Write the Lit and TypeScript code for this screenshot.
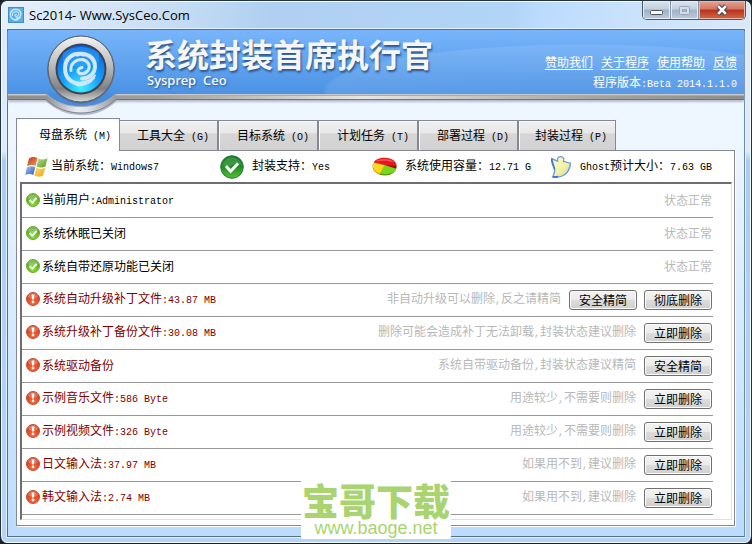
import { LitElement, html, css, svg } from "lit";
import { customElement, property, state } from "lit/decorators.js";
import { classMap } from "lit/directives/class-map.js";

// Splits mixed text so that Latin runs get the half-width monospace face.
const mixed = (text: string) =>
  text
    .split(/([\x20-\x7e]+)/)
    .filter((p) => p)
    .map((p) => (/^[\x20-\x7e]/.test(p) ? html`<span class="latin">${p}</span>` : p));

const shared = css`
  * {
    box-sizing: border-box;
  }
  .latin {
    font-family: "Liberation Mono", monospace;
    font-size: 10px;
    white-space: pre;
  }
  svg {
    display: block;
    flex: none;
  }
  button {
    font: inherit;
    color: inherit;
    margin: 0;
    padding: 0;
  }
`;

const swirl = svg`
  <g fill="none" stroke="#cfe8ff" stroke-linecap="round">
    <path d="M31 7C20 4 12 11 12 21c0 11 10 18 20 14" stroke-width="4" />
    <path d="M16 31c7 7 19 5 26-3M24 37.500c8 1 14-3 17-7" stroke-width="2" />
    <path d="M24 7c9-3 18 3 18 12 0 7-6 12-13 12" stroke-width="4" />
    <path d="M18 23c-1-7 5-11 11-11 6 1 9 6 6 11-3 4-9 4-10 1-.5-2 1-3.500 4-4" stroke-width="3" />
  </g>`;

interface Row {
  label: string;
  note: string;
  warn?: boolean;
  actions?: string[];
}

@customElement("status-row")
export class StatusRow extends LitElement {
  @property({ attribute: false }) row!: Row;

  static styles = [
    shared,
    css`
      :host {
        box-sizing: border-box;
        display: flex;
        align-items: center;
        height: 33px;
        padding: 0 1px 2px 4px;
        border-bottom: 1px solid #999;
      }
      .label {
        flex: 1;
        margin-left: 2px;
        white-space: nowrap;
      }
      .warn {
        color: #800000;
      }
      .note {
        color: #b8b8b8;
        white-space: nowrap;
      }
      .actions {
        display: flex;
        gap: 7px;
        margin-left: 8px;
        padding-top: 2px;
      }
      .action {
        width: 68px;
        height: 20px;
        border: 1px solid #707070;
        border-radius: 3px;
        color: #000;
        line-height: 18px;
        background: linear-gradient(#f3f3f3, #ebebeb 48%, #dcdcdc 52%, #cfcfcf);
        box-shadow: inset 0 0 0 1px #fcfcfc;
      }
    `,
  ];

  render() {
    const { label, note, warn, actions } = this.row;
    return html`
      <svg width="14" height="16" viewBox="0 0 14 16" aria-hidden="true">
        <defs>
          <radialGradient id="g" cx=".5" cy=".8" r=".8">
            <stop offset="0" stop-color=${warn ? "#ff6a3a" : "#8be02a"} />
            <stop offset="1" stop-color=${warn ? "#c93414" : "#4d9c1c"} />
          </radialGradient>
        </defs>
        <circle cx="7" cy="8" r="6.5" fill="url(#g)" stroke=${warn ? "#b5563c" : "#6da83c"} />
        <ellipse cx="7" cy="5" rx="5" ry="3" fill="#fff" opacity=".25" />
        ${warn
          ? svg`<path d="M5.6 3.6h2.8l-.5 5H6.1z" fill="#fff"/><circle cx="7" cy="10.9" r="1.3" fill="#fff"/>`
          : svg`<path d="M3.6 8l2.6 2.6L10.6 6" fill="none" stroke="#fff" stroke-width="2"/>`}
      </svg>
      <span class=${classMap({ label: true, warn: !!warn })}>${mixed(label)}</span>
      <span class="note">${mixed(note)}</span>
      ${actions
        ? html`<span class="actions">
            ${actions.map((a) => html`<button class="action" type="button">${a}</button>`)}
          </span>`
        : ""}
    `;
  }
}

const ROWS: Row[] = [
  { label: "当前用户:Administrator", note: "状态正常" },
  { label: "系统休眠已关闭", note: "状态正常" },
  { label: "系统自带还原功能已关闭", note: "状态正常" },
  {
    label: "系统自动升级补丁文件:43.87 MB",
    note: "非自动升级可以删除,反之请精简",
    warn: true,
    actions: ["安全精简", "彻底删除"],
  },
  {
    label: "系统升级补丁备份文件:30.08 MB",
    note: "删除可能会造成补丁无法卸载,封装状态建议删除",
    warn: true,
    actions: ["立即删除"],
  },
  { label: "系统驱动备份", note: "系统自带驱动备份,封装状态建议精简", warn: true, actions: ["安全精简"] },
  { label: "示例音乐文件:586 Byte", note: "用途较少,不需要则删除", warn: true, actions: ["立即删除"] },
  { label: "示例视频文件:326 Byte", note: "用途较少,不需要则删除", warn: true, actions: ["立即删除"] },
  { label: "日文输入法:37.97 MB", note: "如果用不到,建议删除", warn: true, actions: ["立即删除"] },
  { label: "韩文输入法:2.74 MB", note: "如果用不到,建议删除", warn: true, actions: ["立即删除"] },
];

const TABS = ["母盘系统 (M)", "工具大全 (G)", "目标系统 (O)", "计划任务 (T)", "部署过程 (D)", "封装过程 (P)"];
const LINKS = ["赞助我们", "关于程序", "使用帮助", "反馈"];

const windowsIcon = html`<svg width="24" height="22" viewBox="0 0 24 22" aria-hidden="true">
  <defs>
    <linearGradient id="wr" x2="1" y2="1"><stop stop-color="#b8391c" /><stop offset="1" stop-color="#f59a5a" /></linearGradient>
    <linearGradient id="wg" x2="1" y2="1"><stop stop-color="#c4e08a" /><stop offset="1" stop-color="#4c9a2a" /></linearGradient>
    <linearGradient id="wb" x2="1" y2="1"><stop stop-color="#a8c8f0" /><stop offset="1" stop-color="#2a5cb8" /></linearGradient>
    <linearGradient id="wy" x2="1" y2="1"><stop stop-color="#ffe070" /><stop offset="1" stop-color="#f0a010" /></linearGradient>
  </defs>
  <path d="M4 2.500C7 .5 10 .8 12.500 2L10.500 10C8 8.600 5 8.800 2 10.200z" fill="url(#wr)" />
  <path d="M13.500 2.600c3 1.400 6 1.200 9-.4L20.500 10.500c-3 1.500-6 1.400-9 .1z" fill="url(#wg)" />
  <path d="M1.800 11.500c3-1.600 6-1.600 8.500-.2L8.300 19C6 17.600 3 17.600.2 19z" fill="url(#wb)" />
  <path d="M11.300 11.800c3 1.400 6 1.300 9-.3L18 19.500c-3 1.700-6 1.500-8.700.1z" fill="url(#wy)" />
</svg>`;

const okIcon = html`<svg width="24" height="24" viewBox="0 0 24 24" aria-hidden="true">
  <defs>
    <linearGradient id="ok" x2="0" y2="1"><stop stop-color="#167a22" /><stop offset=".5" stop-color="#1f8f24" /><stop offset="1" stop-color="#55c035" /></linearGradient>
  </defs>
  <circle cx="12" cy="12" r="11.300" fill="url(#ok)" stroke="#2b7a3a" />
  <path d="M2.500 10a9.700 9.700 0 0 1 19 0C15 7 9 13 2.500 10z" fill="#fff" opacity=".15" />
  <path d="M6 11l4.600 5.200L18 8.500" fill="none" stroke="#fff" stroke-width="3" />
</svg>`;

const pieIcon = html`<svg width="25" height="20" viewBox="0 0 25 20" aria-hidden="true">
  <path d="M.8 7v3.500C1.500 15 7 18.500 13 18.500S24 15 24.300 11V8z" fill="#5a9a10" />
  <path d="M.8 7v3.500C1.500 14 4 16.500 8 17.600L12.500 9z" fill="#e8a800" />
  <path d="M12.500 8.500L24.400 7.500v4z" fill="#a00808" />
  <path d="M12.500 8L24.300 12C23 15 18 17 13 17c-2 0-3.500-.3-5-.8z" fill="#78d818" />
  <path d="M12.500 8L8 16.200C3.500 15 .8 11.500.8 7.500L2 5.500z" fill="#ffd820" />
  <path d="M12.500 8L1.500 5.500C3 2.500 7.500.8 12.500.8 19 .8 24.300 4 24.300 8v1z" fill="#e81818" />
  <path d="M3.500 4.500C6 1.500 18 .5 22.500 5.500 17 3.500 9 3 3.500 4.500z" fill="#ff8080" opacity=".6" />
</svg>`;

const ghostIcon = html`<svg width="22" height="24" viewBox="0 0 22 24" aria-hidden="true">
  <defs>
    <linearGradient id="gh" x2="1" y2="1"><stop stop-color="#fdfbd0" /><stop offset=".6" stop-color="#f4f0a0" /><stop offset="1" stop-color="#a8c8d8" /></linearGradient>
  </defs>
  <path d="M2.500 22c2.500-4 3-7 1-10C2.500 9.500 1.500 7 1.700 3.500 3.500 4 5 5.500 7.500 6.200 7 3.500 8.500 1.200 11 1.600c2.600.4 3.300 2.600 2.500 4.800 2.500.3 4.600 1.700 7 1.700-.2 3.500-1.500 8-5.500 11.500-3.500 2.600-8 3-12.500 2.400z" fill="url(#gh)" stroke="#6a9ae0" stroke-width="1.300" />
  <path d="M1.700 4c0 4 2.800 7 2.900 10.500M3 21.800c2 .2 3.500 0 5-.2" fill="none" stroke="#3a74dc" stroke-width="1.600" />
</svg>`;

const INFO = [
  { icon: windowsIcon, text: "当前系统：Windows7", wide: false },
  { icon: okIcon, text: "封装支持：Yes", wide: true },
  { icon: pieIcon, text: "系统使用容量：12.71 G", wide: true },
  { icon: ghostIcon, text: "Ghost预计大小：7.63 GB", wide: true },
];

@customElement("app-root")
export class AppRoot extends LitElement {
  @state() private active = 0;

  static styles = [
    shared,
    css`
      :host {
        display: block;
        background: #1a2028;
        padding-bottom: 1px;
        font: 12px/16px "Noto Sans CJK SC", sans-serif;
        color: #000;
      }
      .window {
        position: relative;
        padding: 0 6px 6px;
        border: 1px solid #26323e;
        border-width: 1px 1px 0;
        border-radius: 7px;
        background: linear-gradient(#dcebfb, #dcebfb 150px, #a9cdf2 160px, #b4d5f6);
        box-shadow: inset 0 0 0 1px #f2f9ff;
      }
      .titlebar {
        display: flex;
        align-items: flex-start;
        height: 28px;
        margin: 0 -5px;
        border-top: 1px solid #f2f9ff;
        border-radius: 6px 6px 0 0;
        background: linear-gradient(100deg, #e6f0fb, #cfe2f5 18%, #afd0f1 36%, #b2d4f5 68%, #bbdcff 72%, #cbe2fb 85%, #d9e9f9);
      }
      .title {
        display: flex;
        flex: 1;
        align-items: center;
        gap: 5px;
        height: 26px;
        margin: 0 0 0 6px;
        font: 13px/16px "Open Sans", "Noto Sans", sans-serif;
      }
      .controls {
        display: flex;
        height: 19px;
        margin: -1px 4px 0 0;
        border: 1px solid #4a5867;
        border-top: 0;
        border-radius: 0 0 5px 5px;
        overflow: hidden;
      }
      .control {
        display: grid;
        place-items: center;
        width: 28px;
        border: 0;
        border-right: 1px solid #8796a8;
        background: linear-gradient(#dbe5ef, #c0cedd 45%, #a0b2c8 50%, #bccbdc);
        box-shadow: inset 0 0 0 1px #e3edf6;
      }
      .control.close {
        width: 46px;
        border-right: 0;
        background: linear-gradient(#e6a394, #d27563 45%, #b8311b 50%, #cf6a4a);
        box-shadow: inset 0 0 0 1px #eab5a6;
      }
      .client {
        padding-bottom: 10px;
        border: 1px solid #55708c;
        border-right-color: #6c88a6;
        box-shadow: 0 0 0 1px #e4f2ff;
        background: linear-gradient(#eef6ff 0, #eef6ff 110px, #bbdcff);
      }
      .banner {
        position: relative;
        display: flex;
        justify-content: space-between;
        height: 70px;
        padding: 0 7px 0 137px;
        border-bottom: 1px solid #6e7480;
        color: #fff;
        background:
          linear-gradient(#d8d8d8, #9c9c9c) 0 64px / 100% 2px no-repeat,
          linear-gradient(90deg, #8e8e8e, #a0a0a0 20%, #e6e6e6 48%, #a4a4a4 80%, #8c8c8c) 0 65px / 100% 4px no-repeat,
          radial-gradient(ellipse 260px 48px at 78% 62px, #ffffff10 0, #ffffff18 98%, transparent),
          linear-gradient(#78b5fb, #4b92e4 64px);
        box-shadow: 0 2px 2px #b4bccb;
      }
      .emblem {
        position: absolute;
        left: 32px;
        top: 0;
      }
      .brand {
        padding-top: 4px;
        white-space: nowrap;
      }
      .name {
        margin: 0;
        font-size: 32px;
        font-weight: 700;
        line-height: 38px;
        color: #f6f6f6;
        text-shadow: 1px 2px 2px #2c558c;
      }
      .sub {
        margin: 0 0 0 2px;
        font: 500 13px/16px "Noto Sans", "Open Sans", sans-serif;
        white-space: pre;
        text-shadow: 1px 1px 2px #2c558c;
      }
      .side {
        padding-top: 24px;
        text-align: right;
        white-space: nowrap;
      }
      .links {
        display: flex;
        justify-content: flex-end;
        gap: 8px;
        margin-bottom: 4px;
      }
      .links a {
        color: #fff;
        text-underline-offset: 2px;
      }
      .tabs {
        display: flex;
        align-items: flex-end;
        margin: 18px 8px 0;
      }
      .tab {
        width: 100px;
        height: 30px;
        padding: 2px 8px 0 0;
        border: 0 solid #868896;
        border-top-width: 1px;
        border-right-width: 2px;
        text-align: right;
        background: linear-gradient(#f0f0f0, #e8e8e8 40%, #d6d6d6 45%, #d2d2d2);
        box-shadow: inset 1px 1px #fafafa;
      }
      .tab:last-child {
        width: 97px;
        border-right-width: 1px;
      }
      .tab.active {
        width: 104px;
        height: 33px;
        margin-bottom: -1px;
        margin-right: -1px;
        padding-top: 0;
        border-width: 1px 1px 0;
        background: #fff;
        z-index: 1;
      }
      .panel {
        margin: 0 9px 0 8px;
        padding: 0 2px 5px 3px;
        border: 1px solid #868896;
        background: #fff;
        box-shadow: 1px 1px #fff;
      }
      .info {
        display: grid;
        grid-template-columns: 195fr 152fr 178fr 182fr;
        align-items: center;
        height: 31px;
        margin: 0;
        padding: 0 0 0 5px;
        list-style: none;
      }
      .info li {
        display: flex;
        align-items: center;
        gap: 2px;
        white-space: nowrap;
      }
      .info li.wide {
        gap: 8px;
      }
      .list {
        margin: 0;
        padding: 1px 18px 4px 0;
        border: 2px solid #6e6e72;
        border-width: 2px 1px 1px 2px;
        border-right-color: #e0e0e0;
        border-bottom-color: #e0e0e0;
        list-style: none;
      }
      .watermark {
        position: absolute;
        left: 50%;
        bottom: 4px;
        width: 150px;
        height: 58px;
        transform: translateX(-50%);
        background: #fff;
        color: #a9d46f;
        text-align: center;
        white-space: nowrap;
      }
      .mark {
        display: block;
        font-size: 37px;
        font-weight: 900;
        line-height: 38px;
      }
      .site {
        display: block;
        color: #a9d46f;
        font: 18px/18px "Liberation Sans", sans-serif;
        text-decoration: none;
      }
    `,
  ];

  render() {
    return html`
      <div class="window">
        <header class="titlebar">
          <div class="title">
            <svg width="16" height="16" viewBox="0 0 16 16" aria-hidden="true">
              <rect width="16" height="16" fill="#3f8fcc" />
              <rect x="1" y="1" width="14" height="14" fill="#5aaee4" />
              <g transform="translate(-1.800 .2) scale(.35)">${swirl}</g>
            </svg>
            <span>Sc2014- Www.SysCeo.Com</span>
          </div>
          <div class="controls">
            <button class="control" type="button" aria-label="最小化">
              <svg width="13" height="12" viewBox="0 0 13 12">
                <rect x=".5" y="6.500" width="12" height="4" rx="1" fill="#fff" stroke="#4c5464" />
              </svg>
            </button>
            <button class="control" type="button" aria-label="最大化" disabled>
              <svg width="13" height="11" viewBox="0 0 13 11">
                <rect x="1.500" y="1.500" width="10" height="8" rx="1" fill="#d4dde8" stroke="#98a6b8" />
                <rect x="4.500" y="4.500" width="4" height="2" fill="#a8b8ca" stroke="#98a6b8" />
              </svg>
            </button>
            <button class="control close" type="button" aria-label="关闭">
              <svg width="14" height="12" viewBox="0 0 14 12">
                <path d="M3 2l8 8M11 2l-8 8" stroke="#4c4454" stroke-width="4.600" />
                <path d="M3.200 2.200l7.600 7.600M10.800 2.200l-7.600 7.600" stroke="#fff" stroke-width="2.600" />
              </svg>
            </button>
          </div>
        </header>

        <main class="client">
          <div class="banner">
            <svg class="emblem" width="84" height="90" viewBox="40 30 84 90" aria-hidden="true">
              <defs>
                <linearGradient id="ring" x2="0" y2="1"><stop stop-color="#f4f4f4" /><stop offset=".5" stop-color="#b4b4b4" /><stop offset=".8" stop-color="#808080" /><stop offset="1" stop-color="#d8d8d8" /></linearGradient>
                <radialGradient id="core" cx=".5" cy=".9" r=".9"><stop stop-color="#40f0ff" /><stop offset=".45" stop-color="#18a0f8" /><stop offset="1" stop-color="#0a60e0" /></radialGradient>
                <linearGradient id="band"><stop stop-color="#909092" /><stop offset=".45" stop-color="#e8ecf2" /><stop offset=".6" stop-color="#dce0e8" /><stop offset="1" stop-color="#98989a" /></linearGradient>
              </defs>
              <path d="M46 100C57 109.500 68 114 81 114s25-4.500 35-14" fill="none" stroke="#b4bccb" stroke-width="2.500" />
              <path d="M46 94C56 103 67 106.500 81 106.500S106 103 116 94v6C106 109 94 113 81 113s-25-4-35-13z" fill="url(#band)" />
              <path d="M46 99.500C56 108.500 68 113 81 113s25-4.500 35-13.500" fill="none" stroke="#7c828e" />
              <path d="M46 93.500C56 103 67 106.500 81 106.500S106 103 116 93.500z" fill="#4a8cda" />
              <path d="M46 94C56 103 67 106.500 81 106.500S106 103 116 94" fill="none" stroke="#a8acb4" />
              <circle cx="81" cy="69.500" r="34" fill="#4c6078" opacity=".6" />
              <circle cx="81" cy="69" r="33" fill="url(#ring)" stroke="#5c6068" />
              <circle cx="81" cy="69" r="25.500" fill="#3c4450" />
              <circle cx="81" cy="69" r="23.500" fill="url(#core)" />
              <path d="M63 53c10-8 26-8 36 0v8.500c-12 8-24 2-36 6z" fill="#48c0ff" opacity=".35" />
              <g transform="translate(53 47.500)">${swirl}</g>
            </svg>
            <div class="brand">
              <h1 class="name">系统封装首席执行官</h1>
              <p class="sub">Sysprep  Ceo</p>
            </div>
            <div class="side">
              <nav class="links">${LINKS.map((l) => html`<a href="#">${l}</a>`)}</nav>
              <div>${mixed("程序版本:Beta 2014.1.1.0")}</div>
            </div>
          </div>

          <div class="tabs" role="tablist">
            ${TABS.map(
              (t, i) => html`<button
                type="button"
                role="tab"
                aria-selected=${i === this.active ? "true" : "false"}
                class=${classMap({ tab: true, active: i === this.active })}
                @click=${() => (this.active = i)}
              >${mixed(t)}</button>`
            )}
          </div>

          <section class="panel">
            <ul class="info">
              ${INFO.map(
                (i) => html`<li class=${classMap({ wide: i.wide })}>${i.icon}<span>${mixed(i.text)}</span></li>`
              )}
            </ul>
            <ul class="list">
              ${ROWS.map((r) => html`<li><status-row .row=${r}></status-row></li>`)}
            </ul>
          </section>
        </main>

        <div class="watermark">
          <span class="mark">宝哥下载</span>
          <a class="site" href="#">www.baoge.net</a>
        </div>
      </div>
    `;
  }
}
